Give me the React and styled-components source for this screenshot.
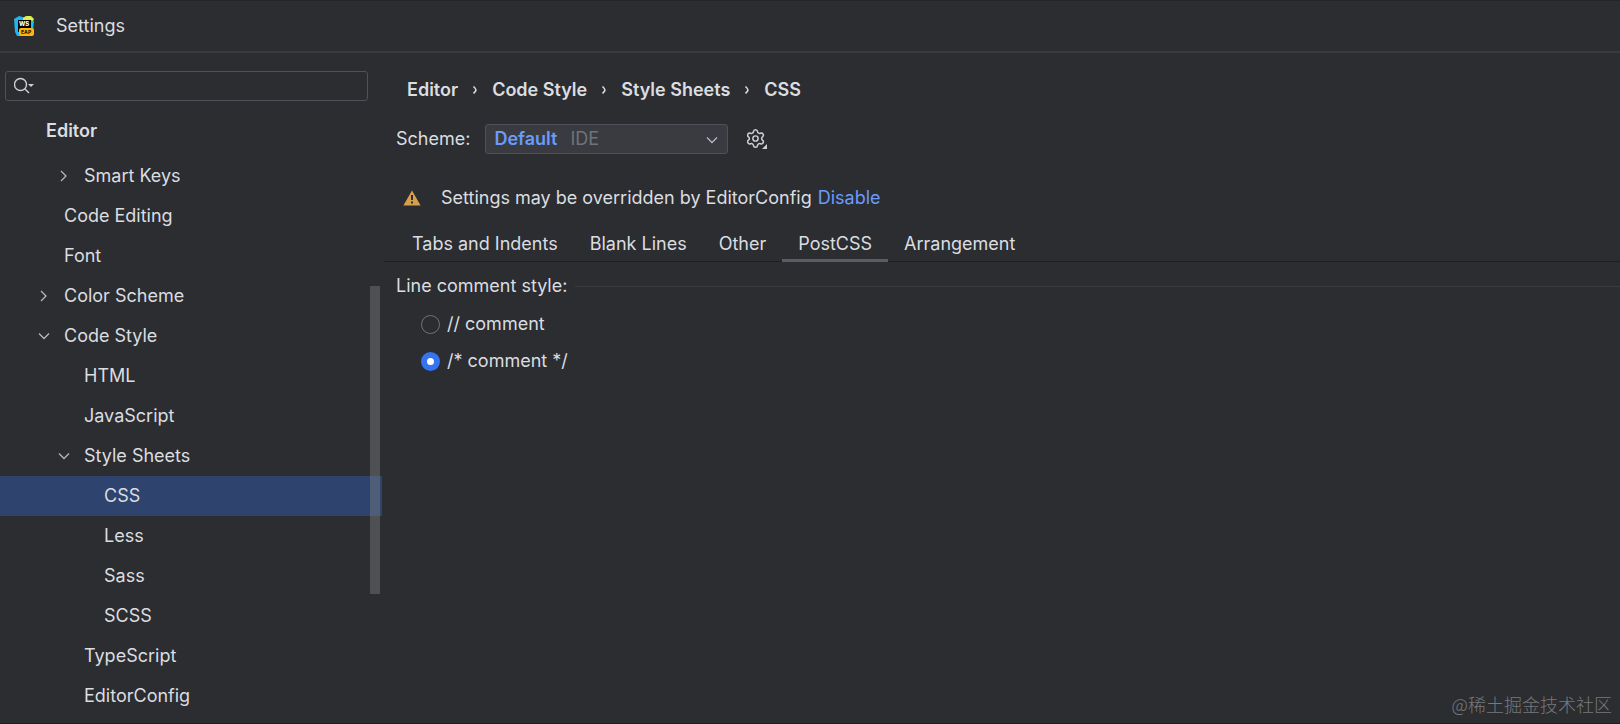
import React, { useState } from "react";
import styled, { createGlobalStyle } from "styled-components";
import { Settings } from "lucide-react";

const GlobalStyle = createGlobalStyle`
  * {
    box-sizing: border-box;
  }
  body {
    margin: 0;
    background: #2b2d30;
    color: #dbdde0;
    font-family: Inter, "Noto Sans CJK SC", sans-serif;
    font-size: 18px;
    line-height: 24px;
  }
  input, select, button {
    font: inherit;
    color: inherit;
  }
`;

const Window = styled.div`
  min-height: 100vh;
  display: flex;
  flex-direction: column;
  border-top: 1px solid #232528;
  border-bottom: 1px solid #1e1f22;
  position: relative;
`;

const TitleBar = styled.header`
  display: flex;
  align-items: center;
  gap: 22px;
  height: 52px;
  padding: 0 14px;
  border-bottom: 2px solid #393b40;
  h1 {
    margin: 0;
    font-size: 18px;
    font-weight: 400;
  }
`;

const Body = styled.div`
  flex: 1;
  display: flex;
`;

const Sidebar = styled.aside`
  width: 382px;
  flex-shrink: 0;
  padding-top: 18px;
`;

const SearchBox = styled.label`
  display: flex;
  align-items: center;
  height: 30px;
  margin: 0 14px 0 5px;
  padding-left: 8px;
  border: 1px solid #4e5157;
  border-radius: 3px;
  input {
    flex: 1;
    min-width: 0;
    border: none;
    outline: none;
    background: transparent;
  }
`;

const Section = styled.h2`
  margin: 10px 0 5px;
  padding-left: 46px;
  font-size: 18px;
  font-weight: 600;
  line-height: 40px;
`;

const TreeArea = styled.div`
  position: relative;
`;

const Tree = styled.ul`
  list-style: none;
  margin: 0;
  padding: 0;
`;

const Row = styled.button`
  display: flex;
  align-items: center;
  gap: 12px;
  width: 100%;
  height: 40px;
  border: none;
  text-align: left;
  padding: 0 0 0 ${({ $level }) => 36 + $level * 20}px;
  background: ${({ $selected }) => ($selected ? "#2e436e" : "transparent")};
`;

const ArrowSlot = styled.span`
  display: flex;
  width: 16px;
`;

const ScrollThumb = styled.div`
  position: absolute;
  top: 130px;
  right: 2px;
  width: 10px;
  height: 308px;
  background: rgba(133, 133, 133, 0.4);
`;

const Main = styled.main`
  flex: 1;
  min-width: 0;
  padding: 25px 0 0 14px;
`;

const Breadcrumbs = styled.nav`
  display: flex;
  align-items: center;
  gap: 14px;
  padding-left: 11px;
  font-weight: 600;
`;

const SchemeRow = styled.div`
  display: flex;
  align-items: center;
  height: 30px;
  margin-top: 22px;
`;

const SelectBox = styled.div`
  position: relative;
  width: 243px;
  margin: 0 19px 0 15px;
  select {
    appearance: none;
    display: block;
    width: 100%;
    height: 30px;
    padding: 0 8px;
    border: 1px solid #4e5157;
    border-radius: 3px;
    background: #393b40;
    color: #6b9bfa;
    font-weight: 600;
  }
`;

const SelectHint = styled.span`
  position: absolute;
  top: 3px;
  left: 85px;
  color: #6f737a;
  pointer-events: none;
`;

const SelectArrow = styled.span`
  position: absolute;
  top: 8px;
  right: 8px;
  display: flex;
  pointer-events: none;
`;

const IconButton = styled.button`
  display: flex;
  padding: 0;
  border: none;
  background: none;
`;

const Notice = styled.div`
  display: flex;
  align-items: center;
  margin-top: 32px;
  padding-left: 7px;
  svg {
    margin-right: 20px;
  }
  a {
    margin-left: 6px;
    color: #6b9bfa;
    text-decoration: none;
  }
`;

const Tabs = styled.div`
  display: flex;
  margin: 17px 0 0 -12px;
  padding-left: 12px;
  border-bottom: 1px solid #1e1f22;
`;

const Tab = styled.button`
  height: 35px;
  margin-bottom: -1px;
  padding: 2px 16px 0;
  border: none;
  border-bottom: 3px solid ${({ $active }) => ($active ? "#5a5d63" : "transparent")};
  background: none;
`;

const Group = styled.fieldset`
  margin: 12px 0 0;
  padding: 0;
  border: none;
`;

const GroupTitle = styled.legend`
  display: flex;
  align-items: center;
  gap: 8px;
  width: 100%;
  padding: 0;
  &::after {
    content: "";
    flex: 1;
    height: 1px;
    background: #393b40;
  }
`;

const Options = styled.div`
  display: flex;
  flex-direction: column;
  gap: 13px;
  padding: 14px 0 0 25px;
`;

const Option = styled.label`
  display: flex;
  align-items: center;
  gap: 7px;
  input {
    appearance: none;
    width: 19px;
    height: 19px;
    margin: 0;
    border: 1px solid #6f737a;
    border-radius: 50%;
  }
  input:checked {
    border: 6px solid #3574f0;
    background: #fff;
  }
`;

const Watermark = styled.span`
  position: absolute;
  right: 8px;
  bottom: 7px;
  color: #77797c;
  font-family: "Noto Sans CJK SC", sans-serif;
  font-weight: 300;
`;

const Chevron = ({ open }) => (
  <svg width="16" height="16" viewBox="0 0 16 16" fill="none" stroke="#b4b8bf" strokeWidth="1.3">
    <path d={open ? "M3 5.5L8 10.5L13 5.5" : "M5 3L10 8L5 13"} />
  </svg>
);

const CrumbArrow = () => (
  <svg width="6" height="10" viewBox="0 0 6 10" fill="none" stroke="#dbdde0" strokeWidth="1.6">
    <path d="M1.5 1.5Q4 4 4 5Q4 6 1.5 8.5" />
  </svg>
);

const Logo = () => (
  <svg width="20" height="20" viewBox="0 0 20 20">
    <path d="M0 3L5 0L12 2L10 20H3L1 16Z" fill="#1fb5ee" />
    <path d="M9 2L12 0H17L20 3L18 7H9Z" fill="#dff04e" />
    <path d="M15 4L20 5L19 14H14Z" fill="#16c4f0" />
    <rect x="4" y="4" width="13" height="12" fill="#000" />
    <text x="5" y="10" fontSize="6" fontWeight="800" fill="#fff">WS</text>
    <rect x="5" y="12" width="15" height="8" rx="2" fill="#fdb60d" />
    <text x="7" y="18" fontSize="5" fontWeight="800" fill="#2b2000">EAP</text>
  </svg>
);

const SearchIcon = () => (
  <svg width="22" height="18" viewBox="0 0 22 18" fill="none" stroke="#ced0d6" strokeWidth="1.4">
    <circle cx="6.5" cy="7.5" r="6" />
    <path d="M10.8 11.8L15 16" />
    <path d="M14 7H20L17 10Z" fill="#ced0d6" stroke="none" />
  </svg>
);

const GearIcon = () => (
  <svg width="20" height="20" viewBox="0 0 20 20">
    <Settings x={-2} y={-1} size={21} color="#ced0d6" strokeWidth={1.7} />
    <path d="M20 15V20H15Z" fill="#ced0d6" />
  </svg>
);

const WarningIcon = () => (
  <svg width="18" height="16" viewBox="0 0 18 16">
    <path d="M9 0.5L17.6 15.5H0.4Z" fill="#d6a04a" />
    <path d="M9 5V10M9 11.5V13.5" stroke="#2b2d30" strokeWidth="2" />
  </svg>
);

const items = [
  { name: "Smart Keys", level: 1, arrow: "closed" },
  { name: "Code Editing", level: 0 },
  { name: "Font", level: 0 },
  { name: "Color Scheme", level: 0, arrow: "closed" },
  { name: "Code Style", level: 0, arrow: "open" },
  { name: "HTML", level: 1 },
  { name: "JavaScript", level: 1 },
  { name: "Style Sheets", level: 1, arrow: "open" },
  { name: "CSS", level: 2 },
  { name: "Less", level: 2 },
  { name: "Sass", level: 2 },
  { name: "SCSS", level: 2 },
  { name: "TypeScript", level: 1 },
  { name: "EditorConfig", level: 1 },
];

const path = ["Editor", "Code Style", "Style Sheets", "CSS"];
const tabs = ["Tabs and Indents", "Blank Lines", "Other", "PostCSS", "Arrangement"];
const styles = ["// comment", "/* comment */"];

function App() {
  const [selected, setSelected] = useState("CSS");
  const [tab, setTab] = useState("PostCSS");
  const [comment, setComment] = useState(styles[1]);

  return (
    <Window>
      <GlobalStyle />
      <TitleBar>
        <Logo />
        <h1>Settings</h1>
      </TitleBar>
      <Body>
        <Sidebar>
          <SearchBox>
            <SearchIcon />
            <input type="text" aria-label="Search" />
          </SearchBox>
          <Section>Editor</Section>
          <TreeArea>
            <Tree>
              {items.map((item) => (
                <li key={item.name}>
                  <Row
                    $level={item.level}
                    $selected={item.name === selected}
                    onClick={() => setSelected(item.name)}
                  >
                    <ArrowSlot>
                      {item.arrow && <Chevron open={item.arrow === "open"} />}
                    </ArrowSlot>
                    {item.name}
                  </Row>
                </li>
              ))}
            </Tree>
            <ScrollThumb />
          </TreeArea>
        </Sidebar>
        <Main>
          <Breadcrumbs>
            {path.map((name, i) => (
              <React.Fragment key={name}>
                {i > 0 && <CrumbArrow />}
                <span>{name}</span>
              </React.Fragment>
            ))}
          </Breadcrumbs>
          <SchemeRow>
            <label htmlFor="scheme">Scheme:</label>
            <SelectBox>
              <select id="scheme">
                <option>Default</option>
              </select>
              <SelectHint>IDE</SelectHint>
              <SelectArrow>
                <Chevron open />
              </SelectArrow>
            </SelectBox>
            <IconButton aria-label="Scheme actions">
              <GearIcon />
            </IconButton>
          </SchemeRow>
          <Notice>
            <WarningIcon />
            Settings may be overridden by EditorConfig
            <a href="#disable">Disable</a>
          </Notice>
          <Tabs role="tablist">
            {tabs.map((name) => (
              <Tab
                key={name}
                role="tab"
                aria-selected={name === tab}
                $active={name === tab}
                onClick={() => setTab(name)}
              >
                {name}
              </Tab>
            ))}
          </Tabs>
          <Group>
            <GroupTitle>Line comment style:</GroupTitle>
            <Options>
              {styles.map((name) => (
                <Option key={name}>
                  <input
                    type="radio"
                    name="comment"
                    checked={comment === name}
                    onChange={() => setComment(name)}
                  />
                  {name}
                </Option>
              ))}
            </Options>
          </Group>
        </Main>
      </Body>
      <Watermark>@稀土掘金技术社区</Watermark>
    </Window>
  );
}

export default App;
